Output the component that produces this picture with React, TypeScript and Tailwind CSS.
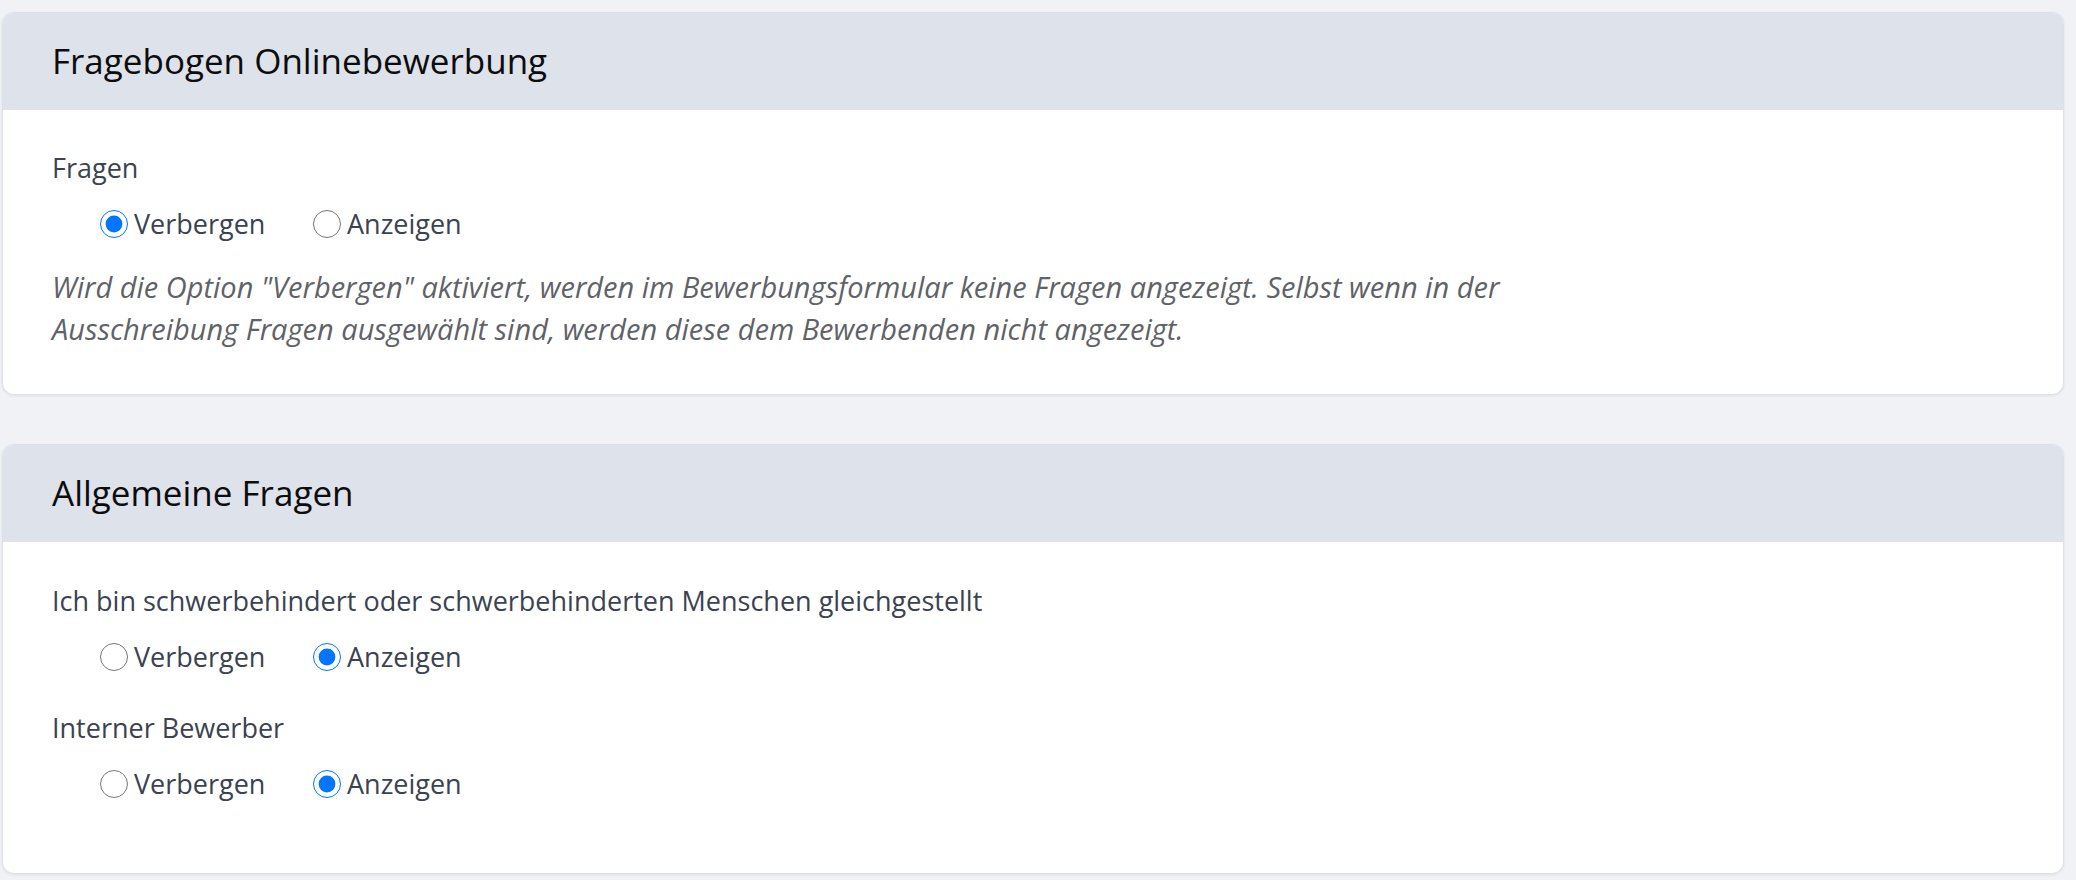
import React, { useState } from 'react';

type Choice = 'hide' | 'show';

interface RadioRowProps {
  name: string;
  value: Choice;
  onChange: (v: Choice) => void;
}

const RadioRow: React.FC<RadioRowProps> = ({ name, value, onChange }) => {
  const options: { key: Choice; label: string }[] = [
    { key: 'hide', label: 'Verbergen' },
    { key: 'show', label: 'Anzeigen' },
  ];
  return (
    <div className="flex items-center h-[40px] pl-[48px]">
      {options.map(opt => (
        <label key={opt.key} className="w-[213px] flex items-center gap-[6px] cursor-pointer">
          <input
            type="radio"
            name={name}
            checked={value === opt.key}
            onChange={() => onChange(opt.key)}
            className="m-0 w-[28px] h-[28px] shrink-0"
          />
          <span className="text-[27px] leading-[40px] text-[#3b4350]">{opt.label}</span>
        </label>
      ))}
    </div>
  );
};

const Card: React.FC<{ title: string; children: React.ReactNode }> = ({ title, children }) => (
  <div className="bg-white rounded-[12px] border border-[#dce1e8] shadow-[0_1px_3px_rgba(30,40,60,0.08)] overflow-hidden">
    <div className="h-[97px] bg-[#dee2ea] flex items-center px-[49px]">
      <h2 className="text-[35px] text-[#0d0d0d] font-normal">{title}</h2>
    </div>
    {children}
  </div>
);

export default function App() {
  const [fragen, setFragen] = useState<Choice>('hide');
  const [schwer, setSchwer] = useState<Choice>('show');
  const [intern, setIntern] = useState<Choice>('show');

  return (
    <div
      className="min-h-[880px] bg-[#f0f2f5] pt-[12px] pl-[2px] pr-[12px] pb-[10px] flex flex-col gap-[49px]"
      style={{ fontFamily: '"Open Sans", "Noto Sans", sans-serif' }}
    >
      <Card title="Fragebogen Onlinebewerbung">
        <div className="px-[49px] pt-[38px] pb-[44px]">
          <div className="text-[27px] leading-[40px] text-[#3b4350]">Fragen</div>
          <div className="mt-[16px]">
            <RadioRow name="fragen" value={fragen} onChange={setFragen} />
          </div>
          <p className="mt-[22px] text-[29px] leading-[42px] italic text-[#5f6368]">
            Wird die Option "Verbergen" aktiviert, werden im Bewerbungsformular keine Fragen angezeigt. Selbst wenn in der
            <br />
            Ausschreibung Fragen ausgewählt sind, werden diese dem Bewerbenden nicht angezeigt.
          </p>
        </div>
      </Card>

      <Card title="Allgemeine Fragen">
        <div className="px-[49px] pt-[39px] pb-[34px]">
          <div className="mb-[31px]">
            <div className="text-[27px] leading-[40px] text-[#3b4350]">
              Ich bin schwerbehindert oder schwerbehinderten Menschen gleichgestellt
            </div>
            <div className="mt-[16px]">
              <RadioRow name="schwer" value={schwer} onChange={setSchwer} />
            </div>
          </div>
          <div className="mb-[35px]">
            <div className="text-[27px] leading-[40px] text-[#3b4350]">Interner Bewerber</div>
            <div className="mt-[16px]">
              <RadioRow name="intern" value={intern} onChange={setIntern} />
            </div>
          </div>
        </div>
      </Card>
    </div>
  );
}
